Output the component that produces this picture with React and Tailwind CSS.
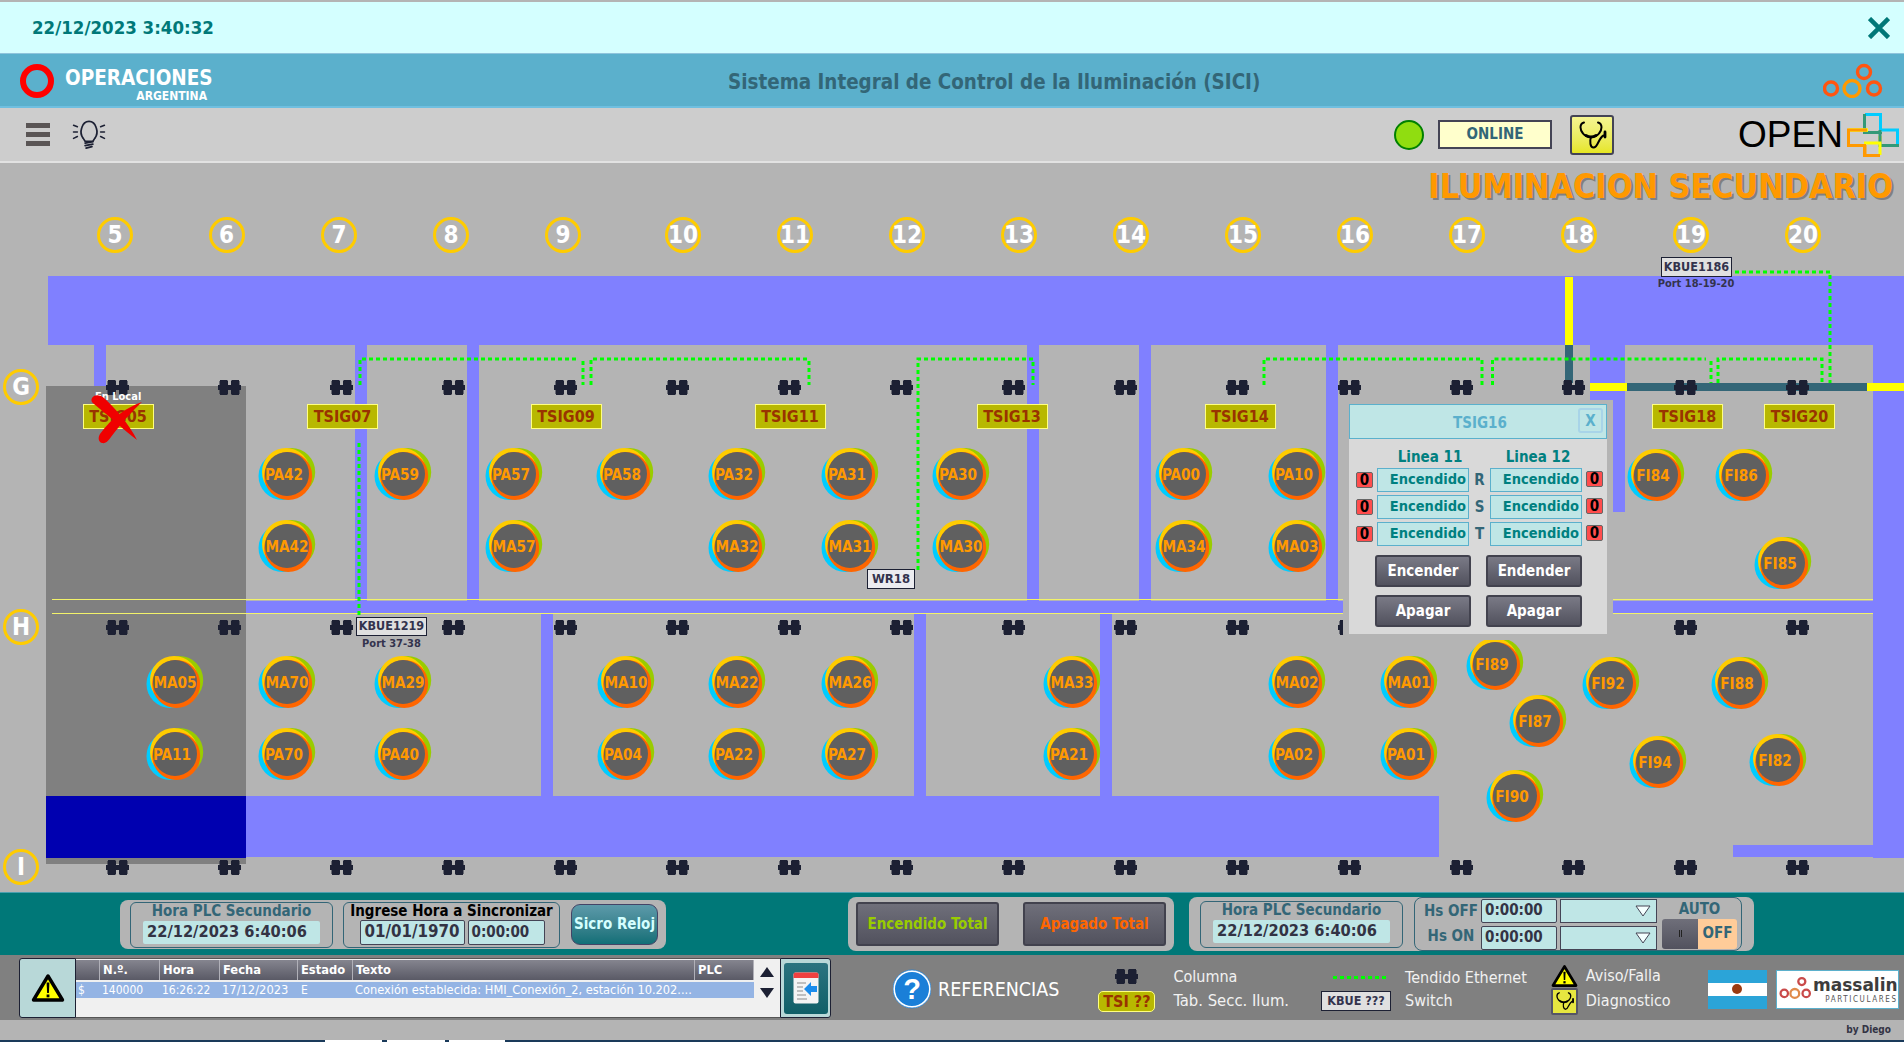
import React from "react";

const TOP = 163;
const Y = (v) => v - TOP;
const COLS = [117.5,229.5,341.5,453.5,565.5,677.5,789.5,901.5,1013.5,1125.5,1237.5,1349.5,1461.5,1573.5,1685.5,1797.5];
const COL_LABELS = [[5,115],[6,226.5],[7,339],[8,451],[9,563],[10,683],[11,795],[12,907],[13,1019],[14,1131],[15,1243],[16,1355],[17,1467],[18,1579],[19,1691],[20,1803]];
const ROW_LABELS = [["G",387],["H",627],["I",867]];

// [x1, y1, x2, y2, colour]
const PURPLE = "#8080ff";
const RECTS = [
  [48,276,1904,345,PURPLE],
  [94,345,106,386,PURPLE],
  [355,345,367,601,PURPLE],
  [467,345,479,601,PURPLE],
  [1027,345,1039,601,PURPLE],
  [1139,345,1151,601,PURPLE],
  [1326,345,1338,601,PURPLE],
  [1590,345,1625,400,PURPLE],
  [1613,400,1625,512,PURPLE],
  [1873,345,1904,858,PURPLE],
  [246,601,1873,613,PURPLE],
  [541,613,553,796,PURPLE],
  [914,613,926,796,PURPLE],
  [1100,613,1112,796,PURPLE],
  [246,796,1439,857,PURPLE],
  [1733,845,1874,857,PURPLE],
  [46,386,246,864,"#808080"],
  [46,796,246,858,"#0000b0"],
  [52,599,1873,600,"#f2f26a"],
  [52,613,1873,614,"#f2f26a"],
  [1590,383,1627,391,"#ffff00"],
  [1627,383,1867,391,"#336677"],
  [1867,383,1904,391,"#ffff00"],
  [1565,277,1573,345,"#ffff00"],
  [1565,345,1573,383,"#336677"],
];

const GREEN_LINES = [
  "M360 385V359H578","M583 361V385","M591 385V359H807","M809 361V385",
  "M918 570V359H1033V385","M359 443V615",
  "M1264 385V359H1482V385","M1492.5 385V359H1706","M1711 361V383","M1718 383V359H1822V383",
  "M1735 272H1830V383",
];

const LAMPS = [
  ["PA42",287,474],["PA59",403,474],["PA57",514,474],["PA58",625,474],["PA32",737,474],["PA31",850,474],["PA30",961,474],["PA00",1184,474],["PA10",1297,474],["FI84",1656,475],["FI86",1744,475],
  ["MA42",287,546],["MA57",514,546],["MA32",737,546],["MA31",850,546],["MA30",961,546],["MA34",1184,546],["MA03",1297,546],["FI85",1783,563],
  ["MA05",175,682],["MA70",287,682],["MA29",403,682],["MA10",626,682],["MA22",737,682],["MA26",850,682],["MA33",1072,682],["MA02",1297,682],["MA01",1409,682],
  ["PA11",175,754],["PA70",287,754],["PA40",403,754],["PA04",626,754],["PA22",737,754],["PA27",850,754],["PA21",1072,754],["PA02",1297,754],["PA01",1409,754],
  ["FI89",1495,664],["FI92",1611,683],["FI88",1740,683],["FI87",1538,721],["FI94",1658,762],["FI82",1778,760],["FI90",1515,796],
];

const TAGS = [["TSIG05",118],["TSIG07",342.5],["TSIG09",566],["TSIG11",790],["TSIG13",1012],["TSIG14",1240],["TSIG18",1687.5],["TSIG20",1799.5]];

const Dumbbell = ({ className = "", style }) => (
  <svg viewBox="0 0 23 15" width="23" height="15" className={className} style={style}>
    <path fill="#1c2033" d="M2 0H9.5V1H10V5H13V1H13.5V0H21V1H21.5V5H23V10H21.5V14H21V15H13.5V14H13V10H10V14H9.5V15H2V14H1.5V10H0V5H1.5V1H2Z" />
  </svg>
);

const Lamp = ({ label, x, y }) => (
  <div className="absolute h-[60px] w-[64px]" style={{ left: x - 32, top: Y(y) - 30 }}>
    <svg viewBox="-32 -30 64 60" width="64" height="60" className="absolute left-0 top-0">
      <circle cx="4.2" cy="-2" r="24" fill="#99cc00" />
      <circle cx="-4.5" cy="2" r="24" fill="#00ccff" />
      <circle cx="-1" cy="-2" r="24" fill="#ffcc00" />
      <circle cx="1.2" cy="2" r="24" fill="#ff6600" />
      <circle cx="0" cy="0" r="22" fill="#606060" />
    </svg>
    <span
      className="absolute left-0 top-[21px] w-[64px] text-center text-[15.2px] font-bold leading-[20px] text-[#ff9900]"
      style={{ marginLeft: label.startsWith("MA") ? 0 : -3 }}
    >{label}</span>
  </div>
);

const Tag = ({ label, x }) => (
  <div className="absolute flex h-[25px] w-[71px] items-center justify-center border border-[#ffff80] bg-[#b8b800] text-[16px] font-bold text-[#993300]" style={{ left: x - 35.5, top: Y(404) }}>{label}</div>
);

const Warning = ({ w, h }) => (
  <svg viewBox="0 0 34 30" width={w} height={h}>
    <path d="M17 3 L31.5 27 H2.5 Z" fill="#ffff00" stroke="#000" strokeWidth="3.4" strokeLinejoin="round" />
    <path d="M15.6 9.5H18.4L17.9 20H16.1Z" fill="#000" />
    <rect x="15.6" y="21.5" width="2.8" height="2.8" fill="#000" />
  </svg>
);

const Stetho = ({ w, h }) => (
  <svg viewBox="0 0 32 32" width={w} height={h} fill="none" stroke="#000" strokeWidth="2" strokeLinecap="round">
    <path d="M8 3.5C3 5 4 11 7 14.5C9 17 12 18 15 18C18 18 21 17 23 14.5C26 11 27 5 22 3.5" />
    <path d="M15 18C13.5 22 14 29 18 28.5C22 28 22.5 19 27.5 16.5" />
    <path d="M10 16.5Q15 19.5 20 16.5" strokeWidth="2.8" />
    <path d="M29 13V18" strokeWidth="2.8" />
  </svg>
);

const Bulb = () => (
  <svg viewBox="0 0 34 30" width="34" height="29" fill="none" stroke="#1c2033" strokeLinecap="round">
    <path d="M11 19C8 15 8.5 11 9.5 8C11 3 14 1.5 17 1.5C20 1.5 23 3 24.5 8C25.5 11 26 15 23 19C22 20.5 21.5 21 21 22H13C12.5 21 12 20.5 11 19Z" strokeWidth="1.8" fill="#cdcdcd" />
    <path d="M13 24L21 22.5M13 26.5L21 25M14 29L20 27.5" strokeWidth="1.8" />
    <path d="M1 5.5L5 7M1 12.5H5M1 19L5 17M33 5.5L29 7M33 12.5H29M33 19L29 17" strokeWidth="1.6" />
  </svg>
);

const OpenLogo = () => (
  <svg viewBox="0 0 52 44" width="52" height="44" fill="none" strokeWidth="3">
    <path d="M33 23V28" stroke="#f0f000" />
    <path d="M18 1.5H33.5V18" stroke="#00ccff" />
    <path d="M17.5 1V19.5H33.5" stroke="#339977" />
    <path d="M33 17H50.5V31" stroke="#00ccff" />
    <path d="M50.5 31V32.5H33V17" stroke="#339977" />
    <path d="M1.5 17H21" stroke="#ffff00" strokeWidth="3.5" />
    <path d="M20 17H1.5V32.5H17.5" stroke="#ff9900" />
    <path d="M18 32V42.5H33" stroke="#ff9900" />
    <path d="M17 30H33V42" stroke="#ffff00" />
    <path d="M17.5 31V43M16 42.5H33" stroke="#ff9900" />
    <path d="M33.5 19V21" stroke="#339977" />
  </svg>
);

const OrangeDots = () => (
  <svg viewBox="0 0 60 35" width="60" height="35" fill="none" strokeWidth="3.4">
    <circle cx="41" cy="9" r="6.5" stroke="#ff5511" />
    <circle cx="8" cy="25.5" r="6.5" stroke="#ff5511" />
    <circle cx="29" cy="25.5" r="8" stroke="#ff9900" />
    <circle cx="51" cy="25.5" r="6.5" stroke="#ff5511" />
  </svg>
);

const MassalinDots = () => (
  <svg viewBox="0 0 38 30" width="38" height="30" fill="none" strokeWidth="2.6">
    <circle cx="26" cy="6.5" r="4" stroke="#c94a4a" />
    <circle cx="6" cy="20" r="4.2" stroke="#c94a4a" />
    <circle cx="18" cy="20" r="5" stroke="#e08a4a" />
    <circle cx="31" cy="20" r="4.2" stroke="#c94a4a" />
  </svg>
);

const Switch = ({ text, className, style }) => (
  <div className={`flex items-center justify-center border border-[#1c2033] bg-[#e0e0e0] font-bold text-[#33334d] ${className}`} style={style}>{text}</div>
);

const HoraBox = ({ className }) => (
  <div className={`flex flex-col items-center rounded-[6px] border border-[#336677] ${className}`}>
    <div className="text-[15px] font-bold leading-[17px] text-[#336677]">Hora PLC Secundario</div>
    <div className="mt-[1px] flex h-[23px] w-[177px] items-center rounded-[2px] bg-[#bfe6e6] pl-[4px] text-[16.3px] font-bold text-[#333344]">22/12/2023 6:40:06</div>
  </div>
);

const DlgField = () => (
  <div className="flex h-[24px] w-[92px] items-center justify-end border border-[#5bb0cc] bg-[#bfe6e6] pr-[2px] text-[14.5px] font-bold text-[#008080]">Encendido</div>
);
const Zero = () => (
  <div className="flex h-[16px] w-[17px] items-center justify-center rounded-[2px] border border-[#666666] bg-[#ff4d4d] text-[15px] font-bold leading-none text-black">0</div>
);
const DlgBtn = ({ children }) => (
  <div className="flex h-[32px] w-[96px] items-center justify-center rounded-[3px] border-2 border-[#42424e] bg-linear-to-b from-[#7a7a86] to-[#52525e] text-[15px] font-bold text-white">{children}</div>
);

const Dialog = () => (
  <div className="absolute z-20 h-[240px] w-[270px] bg-[#b4b4b4] pl-[6px] pt-[4px]" style={{ left: 1343, top: Y(400) }}>
    <div className="flex h-[230px] w-[258px] flex-col bg-[#d9d9d9]">
      <div className="relative flex h-[35px] items-center justify-center border border-[#5bb0cc] bg-[#bfe6e6] pl-[4px] pt-[3px] text-[15px] font-bold text-[#5bb0cc]">
        TSIG16
        <div className="absolute right-[3px] top-[3px] flex h-[25px] w-[25px] items-center justify-center rounded-[3px] border-2 border-[#a8d4e8] pt-[1px] text-[15px]">X</div>
      </div>
      <div className="mt-[8px] flex text-[15px] font-bold leading-[20px] text-[#008080]">
        <div className="ml-[35px] w-[92px] text-center">Linea 11</div>
        <div className="ml-[16px] w-[92px] text-center">Linea 12</div>
      </div>
      <div className="mt-[1px] flex flex-col gap-[3px]">
        {["R","S","T"].map((l) => (
          <div key={l} className="flex items-center">
            <div className="ml-[7px] mr-[4px]"><Zero /></div>
            <DlgField />
            <div className="w-[21px] text-center text-[15px] font-bold text-[#336677]">{l}</div>
            <DlgField />
            <div className="ml-[4px] -translate-y-[1px]"><Zero /></div>
          </div>
        ))}
      </div>
      <div className="ml-[26px] mt-[9px] grid w-[207px] grid-cols-[96px_96px] gap-x-[15px] gap-y-[8px]">
        <DlgBtn>Encender</DlgBtn><DlgBtn>Endender</DlgBtn><DlgBtn>Apagar</DlgBtn><DlgBtn>Apagar</DlgBtn>
      </div>
    </div>
  </div>
);

const FloorPlan = () => (
  <div className="relative h-[729px] overflow-hidden bg-[#b4b4b4]">
    {RECTS.map(([x1,y1,x2,y2,c],i) => (
      <div key={i} className="absolute" style={{ left:x1, top:Y(y1), width:x2-x1, height:y2-y1, background:c }} />
    ))}
    <svg className="absolute left-0 top-0" width="1904" height="729" viewBox={`0 ${TOP} 1904 729`} fill="none" stroke="#00ff00" strokeWidth="3" strokeDasharray="4 3">
      {GREEN_LINES.map((d,i) => <path key={i} d={d} />)}
    </svg>
    <div className="absolute right-[11px] top-[6px] text-[33.8px] font-bold leading-[36px] text-[#ff9900] [text-shadow:2px_2px_0_#808080]">ILUMINACION SECUNDARIO</div>
    {COL_LABELS.map(([n,x]) => (
      <div key={n} className="absolute flex h-[36px] w-[36px] items-center justify-center rounded-full border-[3px] border-[#ffcc00] text-[24px] font-bold text-white" style={{ left:x-18, top:Y(217) }}>{n}</div>
    ))}
    {ROW_LABELS.map(([n,y]) => (
      <div key={n} className="absolute left-[3px] flex h-[36px] w-[36px] items-center justify-center rounded-full border-[3px] border-[#ffcc00] text-[24px] font-bold text-white" style={{ top:Y(y)-18 }}>{n}</div>
    ))}
    {COLS.map((x) => <Dumbbell key={x} className="absolute" style={{ left:x-11.5, top:Y(380) }} />)}
    {COLS.map((x) => <Dumbbell key={x} className="absolute" style={{ left:x-11.5, top:Y(620) }} />)}
    {COLS.map((x) => <Dumbbell key={x} className="absolute" style={{ left:x-11.5, top:Y(860) }} />)}
    {TAGS.map(([t,x]) => <Tag key={t} label={t} x={x} />)}
    <div className="absolute text-[11px] font-bold leading-[12px] text-white" style={{ left:95, top:Y(391) }}>En Local</div>
    <svg className="absolute" style={{ left:90, top:Y(393) }} width="54" height="52" viewBox="0 0 54 52">
      <path d="M2 5C5 1 10 2 14 5C24 14 40 32 47 47C36 39 18 22 4 11C1 9 1 7 2 5Z" fill="#f00000" />
      <path d="M52 9C38 14 22 24 10 41C8 44 8 49 12 50C16 51 19 47 21 44C29 33 42 18 52 9Z" fill="#f00000" />
    </svg>
    {LAMPS.map(([l,x,y]) => <Lamp key={l} label={l} x={x} y={y} />)}
    <Switch text="KBUE1186" className="absolute h-[20px] w-[71px] text-[12.5px]" style={{ left:1661, top:Y(257) }} />
    <div className="absolute w-[80px] text-center text-[11px] font-bold leading-[12px] text-[#33334d]" style={{ left:1656, top:Y(278) }}>Port 18-19-20</div>
    <Switch text="KBUE1219" className="absolute h-[19px] w-[71px] text-[12.5px]" style={{ left:356, top:Y(617) }} />
    <div className="absolute w-[71px] text-center text-[11px] font-bold leading-[12px] text-[#33334d]" style={{ left:356, top:Y(638) }}>Port 37-38</div>
    <Switch text="WR18" className="absolute h-[20px] w-[48px] !bg-[#ececf0] text-[13px]" style={{ left:867, top:Y(569) }} />
    <Dialog />
  </div>
);

const TopBars = () => (
  <>
    <div className="flex h-[54px] items-center justify-between border-t-2 border-b border-t-[#b4b4b4] border-b-[#8fc4dc] bg-[#d4ffff] pl-[32px] pr-[14px]">
      <span className="text-[18.5px] font-bold text-[#007878]">22/12/2023 3:40:32</span>
      <svg viewBox="0 0 22 22" width="22" height="22" fill="none" stroke="#007878" strokeWidth="4.5"><path d="M1.5 1.5L20.5 20.5M20.5 1.5L1.5 20.5" /></svg>
    </div>
    <div className="relative flex h-[54px] items-center border-b-2 border-[#6fbfe0] bg-[#5bb0cc] pl-[20px]">
      <div className="mt-[2px] h-[34px] w-[34px] rounded-full border-[6px] border-[#ff0000]" />
      <div className="ml-[11px] mt-[10px] flex w-[150px] flex-col">
        <span className="text-[20.5px] font-bold leading-[23px] text-white">OPERACIONES</span>
        <span className="self-end pr-[8px] text-[12px] font-bold leading-[13px] text-white">ARGENTINA</span>
      </div>
      <div className="ml-[513px] mt-[5px] text-[20.4px] font-bold text-[#336677]">Sistema Integral de Control de la Iluminación (SICI)</div>
      <div className="ml-auto mr-[21px]"><OrangeDots /></div>
    </div>
    <div className="flex h-[55px] items-center border-b-2 border-[#e2e2e2] bg-[#cdcdcd] pl-[26px]">
      <div className="flex w-[24px] flex-col gap-[4px]">
        <div className="h-[5px] bg-[#5a5555]" /><div className="h-[5px] bg-[#5a5555]" /><div className="h-[5px] bg-[#5a5555]" />
      </div>
      <div className="ml-[22px]"><Bulb /></div>
      <div className="ml-[1288px] h-[30px] w-[30px] rounded-full border-2 border-[#008000] bg-[#90dd10]" />
      <div className="ml-[14px] flex h-[29px] w-[114px] items-center justify-center border-2 border-[#444455] bg-[#ffffcc] text-[15px] font-bold text-[#336677]">ONLINE</div>
      <div className="ml-[18px] flex h-[40px] w-[44px] items-center justify-center rounded-[3px] border-2 border-[#444455] bg-linear-to-b from-[#f5f590] to-[#e6e620]"><Stetho w={32} h={32} /></div>
      <div className="ml-[124px] font-['Liberation_Sans',sans-serif] text-[37px] leading-[40px] text-black">OPEN</div>
      <div className="ml-[4px]"><OpenLogo /></div>
    </div>
  </>
);

const TealBar = () => (
  <div className="flex h-[63px] items-start border-t border-[#4aa0b0] bg-[#007878]">
    <div className="ml-[120px] mt-[7px] flex h-[49px] w-[546px] items-center rounded-[8px] bg-[#b4b4b4] pl-[10px]">
      <HoraBox className="h-[46px] w-[203px]" />
      <div className="ml-[10px] flex h-[46px] w-[217px] flex-col items-center rounded-[6px] border border-[#336677]">
        <div className="text-[15px] font-bold leading-[17px] text-black">Ingrese Hora a Sincronizar</div>
        <div className="flex gap-[3px] pl-[1px]">
          <div className="flex h-[25px] w-[105px] items-center justify-center rounded-[2px] border border-[#444455] bg-[#bfe6e6] text-[16.8px] font-bold text-[#333344]">01/01/1970</div>
          <div className="flex h-[25px] w-[77px] items-center rounded-[2px] border border-[#444455] bg-[#bfe6e6] pl-[3px] text-[15px] font-bold text-[#333344]">0:00:00</div>
        </div>
      </div>
      <div className="ml-[11px] flex h-[41px] w-[87px] items-center justify-center rounded-[9px] border border-[#444466] bg-linear-to-b from-[#5c9aaa] to-[#0f6f77] text-[15px] font-bold text-[#d4ffff]">Sicro Reloj</div>
    </div>
    <div className="ml-[182px] mt-[4px] flex h-[54px] w-[326px] items-center rounded-[8px] bg-[#b4b4b4] pl-[8px]">
      <div className="flex h-[44px] w-[143px] items-center justify-center rounded-[3px] border-2 border-[#42424e] bg-linear-to-b from-[#6f6f7a] to-[#52525e] text-[15px] font-bold text-[#99cc00]">Encendido Total</div>
      <div className="ml-[24px] flex h-[44px] w-[143px] items-center justify-center rounded-[3px] border-2 border-[#42424e] bg-linear-to-b from-[#6f6f7a] to-[#52525e] text-[15px] font-bold text-[#ff6600]">Apagado Total</div>
    </div>
    <div className="ml-[15px] mt-[4px] flex h-[54px] w-[565px] items-center rounded-[8px] bg-[#b4b4b4] pl-[11px]">
      <HoraBox className="h-[47px] w-[203px]" />
      <div className="ml-[11px] flex h-[54px] w-[328px] items-center rounded-[8px] border border-[#336677] pl-[6px]">
        <div className="flex w-[60px] flex-col gap-[6px] text-center text-[15px] font-bold leading-[19px] text-[#336677]">
          <span>Hs OFF</span><span>Hs ON</span>
        </div>
        <div className="flex flex-col gap-[3px]">
          {[0,1].map((i) => (
            <div key={i} className="flex gap-[3px]">
              <div className="flex h-[24px] w-[76px] items-center rounded-[2px] border border-[#444455] bg-[#bfe6e6] pl-[3px] text-[15px] font-bold text-[#333344]">0:00:00</div>
              <div className="flex h-[24px] w-[97px] items-center justify-end border border-[#444455] bg-[#bfe6e6] pr-[5px]">
                <svg viewBox="0 0 16 12" width="16" height="12"><path d="M1 1H15L8 11Z" fill="#f4ffff" stroke="#444455" /></svg>
              </div>
            </div>
          ))}
        </div>
        <div className="ml-[5px] flex w-[75px] flex-col items-center">
          <span className="text-[15px] font-bold leading-[19px] text-[#336677]">AUTO</span>
          <div className="flex h-[30px] w-[75px] overflow-hidden rounded-[3px]">
            <div className="flex w-[36px] items-center justify-center gap-[1px] bg-linear-to-b from-[#6f6f7a] to-[#52525e]">
              <div className="h-[7px] w-[1px] bg-[#222222]" /><div className="h-[7px] w-[1px] bg-[#222222]" />
            </div>
            <div className="flex flex-1 items-center justify-center bg-[#ffcc99] text-[15px] font-bold text-[#336677]">OFF</div>
          </div>
        </div>
      </div>
    </div>
  </div>
);

const TH = ({ children }) => (
  <div className="flex items-center border-r border-[#b0b0b8] pl-[3px] text-[12.8px] font-bold text-white">{children}</div>
);

const Alarm = () => (
  <div className="flex h-[60px]">
    <div className="flex w-[57px] items-center justify-center rounded-l-[3px] border border-[#1c2033] bg-[#b8d8d8]"><Warning w={34} h={30} /></div>
    <div className="flex w-[704px] items-start border-y border-[#555555] bg-[#f0f0f0] pt-[1px]">
      <div className="w-[678px]">
        <div className="grid h-[20px] grid-cols-[24px_60px_60px_78px_55px_342px_59px] bg-linear-to-b from-[#85858f] to-[#5a5a66]">
          <TH /><TH>N.º.</TH><TH>Hora</TH><TH>Fecha</TH><TH>Estado</TH><TH>Texto</TH><TH>PLC</TH>
        </div>
        <div className="mt-[2px] grid h-[16px] grid-cols-[24px_60px_60px_78px_55px_342px_59px] items-center bg-[#94b4e4] text-[12px] leading-[16px] text-white">
          <div className="pl-[2px]">$</div><div className="pl-[2px]">140000</div><div className="pl-[2px]">16:26:22</div><div className="pl-[2px] text-[12.8px]">17/12/2023</div><div className="pl-[3px]">E</div><div className="col-span-2 whitespace-nowrap pl-[2px] text-[12.7px]">Conexión establecida: HMI_Conexión_2, estación 10.202....</div>
        </div>
      </div>
      <div className="flex w-[26px] flex-col items-center gap-[11px] pt-[7px]">
        <svg viewBox="0 0 14 10" width="14" height="10"><path d="M7 0L14 10H0Z" fill="#1c2033" /></svg>
        <svg viewBox="0 0 14 10" width="14" height="10"><path d="M0 0H14L7 10Z" fill="#1c2033" /></svg>
      </div>
    </div>
    <div className="flex w-[51px] items-center justify-center rounded-r-[3px] border border-[#1c2033] bg-[#b8d8d8]">
      <div className="flex h-[51px] w-[44px] items-center justify-center rounded-[3px] bg-linear-to-b from-[#2a7480] to-[#0f5f68]">
        <svg viewBox="0 0 26 32" width="26" height="32">
          <rect x="0.5" y="0.5" width="25" height="31" rx="2" fill="#f4f4f4" />
          <path d="M0.5 6V2.5Q0.5 0.5 2.5 0.5H23.5Q25.5 0.5 25.5 2.5V6Z" fill="#f04040" />
          <path d="M4 11H13M4 15H10M4 19H10M4 23H13M4 27H14" stroke="#8a8a8a" strokeWidth="1.2" />
          <path d="M11 17L18 10V14H24V20H18V24Z" fill="#1a8cec" />
        </svg>
      </div>
    </div>
  </div>
);

const Legend = () => (
  <div className="flex items-center self-stretch text-[16px] text-[#f2f2f2]">
    <div className="ml-[62px] flex items-center gap-[7px]">
      <svg viewBox="0 0 38 40" width="38" height="40">
        <circle cx="19" cy="20" r="18" fill="#1a7fd8" stroke="#ffffff" strokeWidth="2" />
        <circle cx="19" cy="20" r="19" fill="none" stroke="#1a7fd8" strokeWidth="0.8" />
        <text x="19" y="30" textAnchor="middle" fontSize="29" fontWeight="700" fill="#fff" fontFamily="Liberation Sans">?</text>
      </svg>
      <span className="pt-[2px] text-[19.5px] text-white">REFERENCIAS</span>
    </div>
    <div className="ml-[39px] grid grid-cols-[57px_auto] grid-rows-[24px_24px] items-center gap-x-[18px] gap-y-[1px]">
      <div className="flex justify-center"><Dumbbell /></div>
      <span>Columna</span>
      <div className="flex h-[21px] items-center justify-center rounded-[5px] border border-[#ffff80] bg-[#b8b800] font-bold text-[#993300]">TSI ??</div>
      <span className="text-[16.5px]">Tab. Secc. Ilum.</span>
    </div>
    <div className="ml-[32px] grid grid-cols-[70px_auto] grid-rows-[24px_23px] items-center gap-x-[14px]">
      <svg viewBox="0 0 56 3" width="56" height="3" className="ml-[12px]"><path d="M0 1.5H56" stroke="#00ff00" strokeWidth="3" strokeDasharray="4 3" /></svg>
      <span>Tendido Ethernet</span>
      <Switch text="KBUE ???" className="h-[20px] w-[70px] text-[12.5px]" />
      <span>Switch</span>
    </div>
    <div className="ml-[24px] grid grid-cols-[27px_auto] grid-rows-[24px_27px] items-center gap-x-[8px]">
      <Warning w={27} h={24} />
      <span>Aviso/Falla</span>
      <div className="flex h-[27px] items-center justify-center rounded-[2px] border-2 border-[#555566] bg-[#e6e640]"><Stetho w={21} h={24} /></div>
      <span>Diagnostico</span>
    </div>
    <div className="ml-[37px] flex h-[39px] w-[59px] flex-col">
      <div className="h-[13px] bg-[#2ba4d8]" />
      <div className="flex h-[13px] items-center justify-center bg-white"><div className="h-[10px] w-[10px] rounded-full bg-[#9a3a10]" /></div>
      <div className="h-[13px] bg-[#2ba4d8]" />
    </div>
    <div className="ml-[9px] flex h-[39px] w-[123px] items-center border border-[#5bb0cc] bg-white pl-[2px]">
      <MassalinDots />
      <div className="ml-[1px] flex flex-col items-end">
        <span className="font-['DejaVu_Sans',sans-serif] text-[17px] font-bold leading-[20px] text-[#3c3c3c]">massalin</span>
        <span className="text-[8px] leading-[9px] tracking-[1.6px] text-[#555555]">PARTICULARES</span>
      </div>
    </div>
  </div>
);

export default function App() {
  return (
    <div className="h-[1042px] w-[1904px] overflow-hidden bg-[#b4b4b4] font-['DejaVu_Sans_Condensed','DejaVu_Sans',sans-serif]">
      <TopBars />
      <FloorPlan />
      <TealBar />
      <div className="flex h-[65px] items-start bg-[#808080] pl-[19px] pt-[3px]">
        <Alarm />
        <Legend />
      </div>
      <div className="flex h-[20px] items-center justify-end bg-[#b4b4b4] pb-[2px] pr-[13px] text-[10px] font-bold text-[#333344]">by Diego</div>
      <div className="flex h-[2px] bg-[#1a3a5a] pl-[325px]">
        <div className="w-[57px] bg-white" /><div className="ml-[5px] w-[58px] bg-white" /><div className="ml-[4px] w-[56px] bg-white" />
      </div>
    </div>
  );
}
